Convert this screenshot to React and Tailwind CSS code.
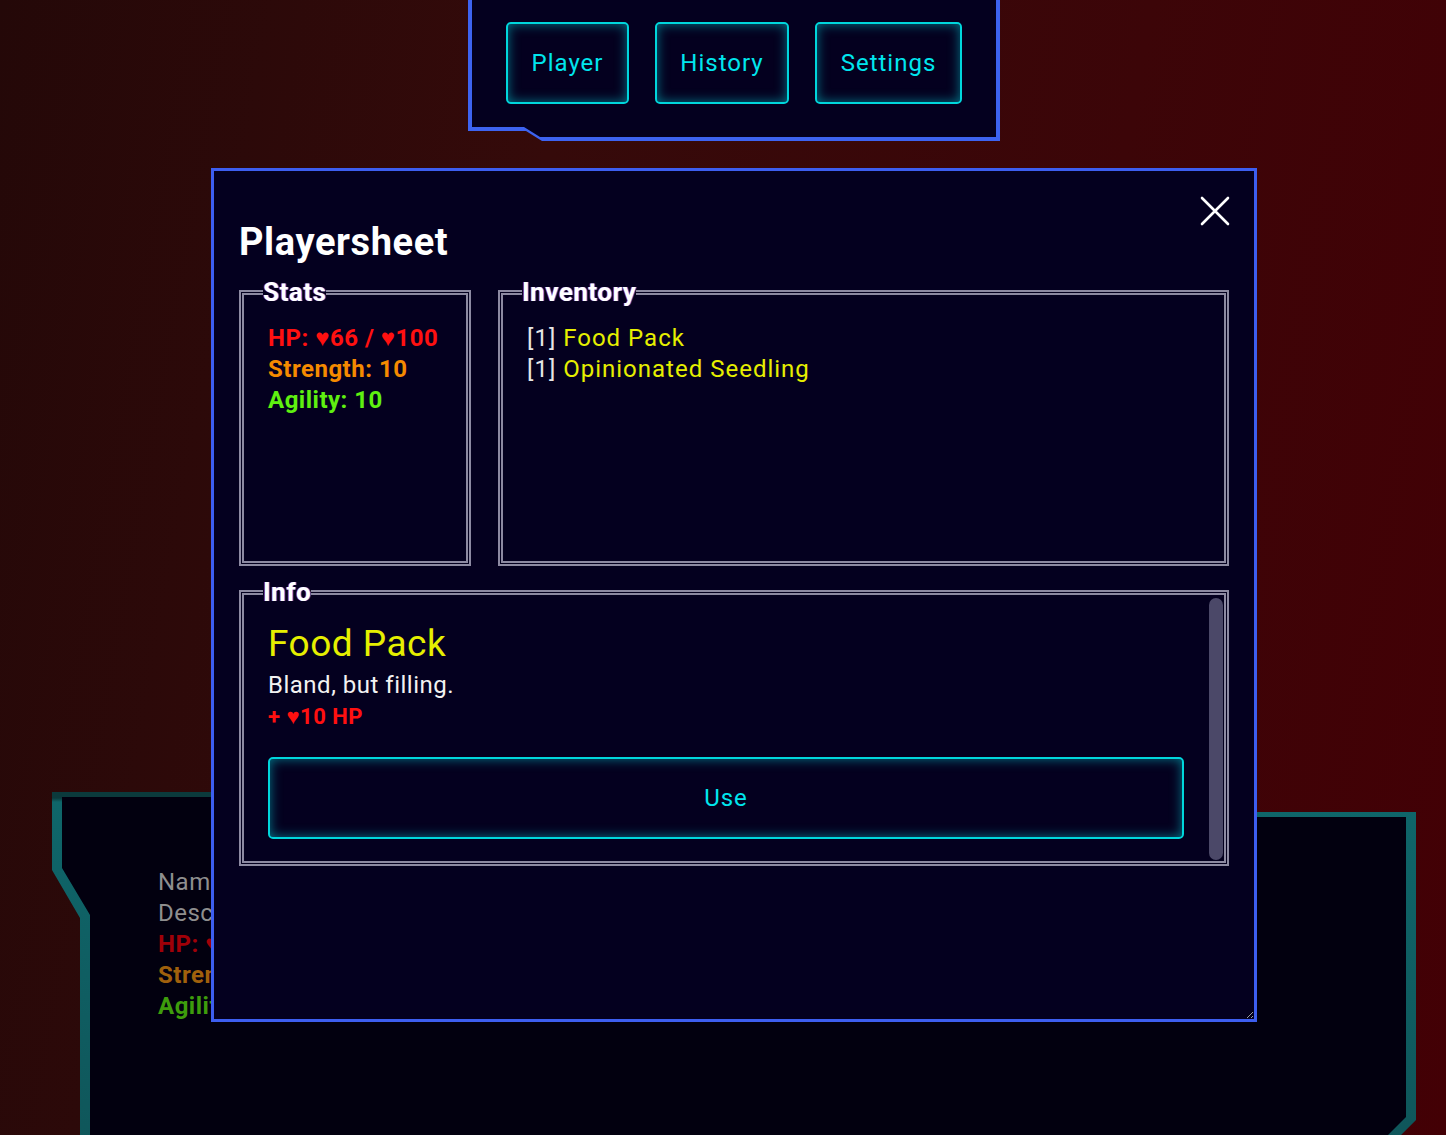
import React, { useState } from 'react'

const font = { fontFamily: 'Roboto, "Noto Sans", sans-serif' }

const NavButton = ({ label, width, onClick }) => (
  <button
    onClick={onClick}
    className={`${width} h-[82px] shrink-0 rounded-[5px] border-2 border-[#00d6dc] bg-[#04001f] text-[24px] tracking-[1px] text-[#00e6ee] shadow-[inset_0_0_12px_rgba(0,214,220,0.55)] cursor-pointer`}
  >
    {label}
  </button>
)

const Legend = ({ children, offset = '-ml-[5px]' }) => (
  <legend className={`${offset} px-0 text-[26px] leading-[30px] font-bold tracking-[0.5px] text-white [text-shadow:1px_0_rgba(70,100,255,0.8),-1px_0_rgba(255,40,70,0.5)]`}>
    {children}
  </legend>
)

const App = () => {
  const [tab, setTab] = useState('Player')
  const [open, setOpen] = useState(true)
  const [selected, setSelected] = useState(0)

  const inventory = [
    { qty: 1, name: 'Food Pack', desc: 'Bland, but filling.', effect: '+ ♥10 HP' },
    { qty: 1, name: 'Opinionated Seedling', desc: 'It has thoughts. Many of them.', effect: '+ ♥5 HP' },
  ]
  const item = inventory[selected]

  return (
    <div
      style={font}
      className='relative h-[1135px] w-full overflow-hidden bg-[linear-gradient(100deg,#240808_0%,#350a0a_35%,#3c0508_70%,#430005_100%)]'
    >
      {/* top navigation */}
      <div className='ml-[468px] w-[532px] h-[141px] bg-[#3d63f0] [clip-path:polygon(0_0,100%_0,100%_100%,74px_100%,58px_131px,0_131px)]'>
        <div className='mx-[4px] h-[137px] bg-[#04001f] [clip-path:polygon(0_0,100%_0,100%_100%,68px_100%,52px_127px,0_127px)]'>
          <div className='flex gap-[26px] pt-[22px] pl-[34px]'>
            <NavButton label='Player' width='w-[123px]' onClick={() => { setTab('Player'); setOpen(true) }} />
            <NavButton label='History' width='w-[134px]' onClick={() => setTab('History')} />
            <NavButton label='Settings' width='w-[147px]' onClick={() => setTab('Settings')} />
          </div>
        </div>
      </div>

      {/* encounter panel behind the sheet */}
      <div className='mt-[651px] ml-[52px] w-[1364px] h-[420px] pt-[5px] px-[10px] bg-[linear-gradient(180deg,#0b3a3c_0px,#0b3a3c_6px,#0f666a_10px,#0f5357_100%)] [clip-path:polygon(0_0,720px_0,720px_20px,100%_20px,100%_328px,1340px_352px,1340px_100%,28px_100%,28px_126px,0_78px)]'>
        <div className='h-full bg-[#02000f] pt-[70px] pl-[96px] text-[24px] leading-[31px] tracking-[0.5px] [clip-path:polygon(0_0,715px_0,715px_20px,100%_20px,100%_320px,1325px_339px,1325px_100%,28px_100%,28px_118px,0_71px)]'>
          <p className='text-[#8e8e8e]'>Name: Scrap Drone</p>
          <p className='text-[#8e8e8e]'>Description: A rusted drone.</p>
          <p className='font-bold text-[#a00008]'>HP: ♥20 / ♥20</p>
          <p className='font-bold text-[#a0600c]'>Strength: 4</p>
          <p className='font-bold text-[#3e9c0c]'>Agility: 6</p>
        </div>
      </div>

      {/* player sheet dialog */}
      {open && (
        <div className='absolute left-[211px] top-[168px] w-[1046px] h-[854px] resize overflow-auto border-[3px] border-[#3d5ef0] bg-[#04001f] px-[25px] pt-[48px]'>
          <button
            onClick={() => setOpen(false)}
            className='absolute right-[24px] top-[25px] w-[30px] h-[30px] cursor-pointer'
          >
            <svg viewBox='0 0 30 30' className='w-[30px] h-[30px]'>
              <path d='M2 2 L28 28 M28 2 L2 28' stroke='#ffffff' strokeWidth='2.6' strokeLinecap='round' fill='none' />
            </svg>
          </button>

          <h1 className='text-[38px] leading-[46px] font-bold tracking-[0.6px] text-white'>Playersheet</h1>

          <div className='mt-[12px] flex gap-[27px]'>
            <fieldset className='w-[232px] h-[289px] shrink-0 border-[5px] border-double border-[#8d8aa2] px-[24px] pt-[16px]'>
              <Legend>Stats</Legend>
              <div className='text-[24px] leading-[31px] font-bold tracking-[0.5px]'>
                <p className='text-[#ff1010]'>HP: ♥66 / ♥100</p>
                <p className='text-[#f58a00]'>Strength: 10</p>
                <p className='text-[#5ff010]'>Agility: 10</p>
              </div>
            </fieldset>

            <fieldset className='flex-1 h-[289px] border-[5px] border-double border-[#8d8aa2] px-[24px] pt-[16px]'>
              <Legend>Inventory</Legend>
              <ul className='text-[24px] leading-[31px] tracking-[1px]'>
                {inventory.map((it, i) => (
                  <li key={it.name} onClick={() => setSelected(i)} className='cursor-pointer'>
                    <span className='text-[#e6e6e6]'>[{it.qty}]</span>{' '}
                    <span className='text-[#e6ef00]'>{it.name}</span>
                  </li>
                ))}
              </ul>
            </fieldset>
          </div>

          <fieldset className='mt-[11px] h-[289px] border-[5px] border-double border-[#8d8aa2] p-0'>
            <Legend offset='ml-[19px]'>Info</Legend>
            <div className='-mt-[9px] flex h-[262px]'>
              <div className='flex-1 overflow-hidden pl-[24px] pr-[25px] pt-[19px]'>
                <h2 className='text-[37px] leading-[53px] tracking-[0.5px] text-[#e6ef00]'>{item.name}</h2>
                <p className='text-[24px] leading-[31px] tracking-[0.5px] text-[#f2f2f2]'>{item.desc}</p>
                <p className='text-[22px] leading-[31px] font-bold tracking-[0.5px] text-[#ff1010]'>{item.effect}</p>
                <button className='mt-[25px] w-full h-[82px] rounded-[5px] border-2 border-[#00d6dc] text-[24px] tracking-[1px] text-[#00e6ee] shadow-[inset_0_0_12px_rgba(0,214,220,0.55)] cursor-pointer'>
                  Use
                </button>
              </div>
              <div className='w-[14px] mr-[1px] rounded-full bg-[#4b4868]' />
            </div>
          </fieldset>
        </div>
      )}
    </div>
  )
}

export default App
